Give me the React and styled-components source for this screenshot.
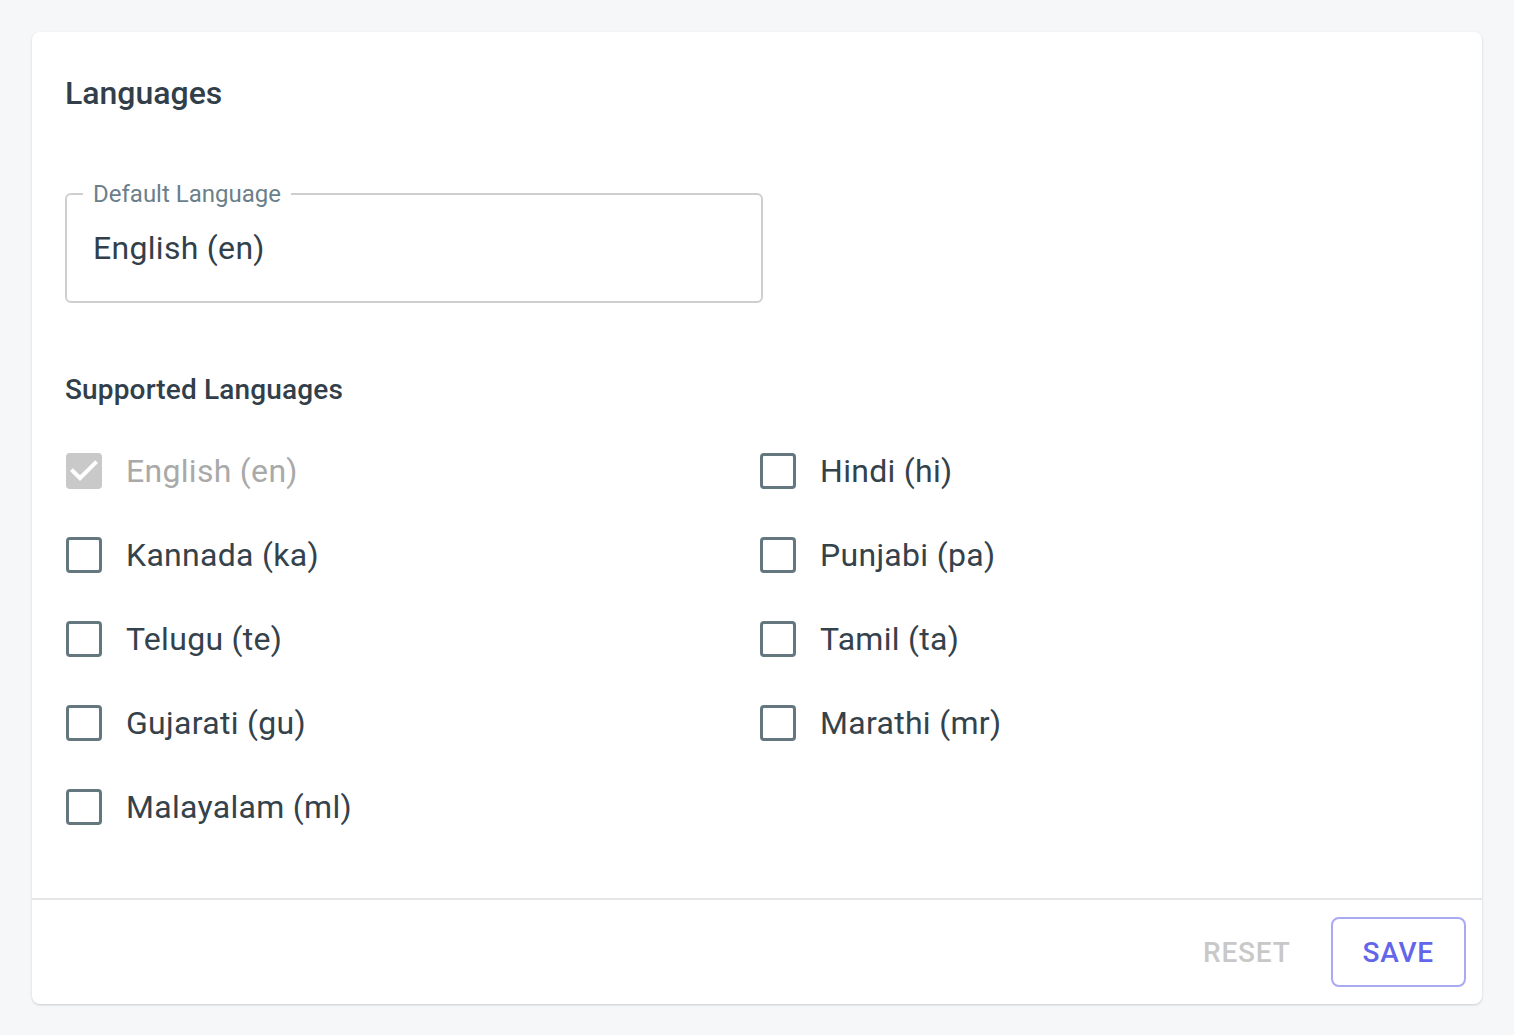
import styled, { createGlobalStyle } from 'styled-components';

const GlobalStyle = createGlobalStyle`
    body {
        margin: 0;
        background: #f6f7f9;
        font-family: Roboto, 'Liberation Sans', sans-serif;
    }
`;

const languages = [
    { name: 'English (en)', checked: true, disabled: true },
    { name: 'Hindi (hi)' },
    { name: 'Kannada (ka)' },
    { name: 'Punjabi (pa)' },
    { name: 'Telugu (te)' },
    { name: 'Tamil (ta)' },
    { name: 'Gujarati (gu)' },
    { name: 'Marathi (mr)' },
    { name: 'Malayalam (ml)' },
];

export default function App() {
    return (
        <Page>
            <GlobalStyle />
            <Card>
                <Body>
                    <Title>Languages</Title>
                    <Outlined>
                        <FloatingLabel>Default Language</FloatingLabel>
                        <Value>English (en)</Value>
                    </Outlined>
                    <Subtitle>Supported Languages</Subtitle>
                    <Grid>
                        {languages.map((lang) => (
                            <Option key={lang.name} disabled={lang.disabled}>
                                <Box checked={lang.checked}>
                                    {lang.checked && (
                                        <svg width='36' height='36' viewBox='3 3 18 18'>
                                            <path
                                                d='M10 17l-5-5 1.41-1.41L10 14.17l7.59-7.59L19 8l-9 9z'
                                                fill='#fff'
                                            />
                                        </svg>
                                    )}
                                </Box>
                                {lang.name}
                            </Option>
                        ))}
                    </Grid>
                </Body>
                <Footer>
                    <Button type='button' disabled>
                        RESET
                    </Button>
                    <Button type='button' outlined>
                        SAVE
                    </Button>
                </Footer>
            </Card>
        </Page>
    );
}

const Page = styled.div`
    padding: 32px;
    min-height: 100vh;
    box-sizing: border-box;
`;

const Card = styled.div`
    background: #fff;
    border-radius: 8px;
    box-shadow: 0 1px 3px rgba(0, 0, 0, 0.12), 0 1px 2px rgba(0, 0, 0, 0.06);
`;

const Body = styled.div`
    padding: 43px 29px 49px 33px;
`;

const Title = styled.h2`
    margin: 0;
    font-size: 32px;
    line-height: 36px;
    font-weight: 500;
    color: #323f4a;
`;

const Outlined = styled.div`
    position: relative;
    width: 698px;
    height: 110px;
    box-sizing: border-box;
    margin-top: 82px;
    border: 2px solid #cfcfcf;
    border-radius: 6px;
    display: flex;
    align-items: center;
    padding: 0 26px;
`;

const FloatingLabel = styled.span`
    position: absolute;
    top: -15px;
    left: 16px;
    padding: 0 10px;
    background: #fff;
    font-size: 24px;
    line-height: 28px;
    color: #6b7f8b;
`;

const Value = styled.span`
    font-size: 32px;
    letter-spacing: 0.3px;
    color: #323f4a;
`;

const Subtitle = styled.h3`
    margin: 71px 0 23px;
    font-size: 28px;
    line-height: 32px;
    letter-spacing: 0.15px;
    font-weight: 500;
    color: #323f4a;
`;

const Grid = styled.div`
    display: grid;
    grid-template-columns: 1fr 1fr;
    grid-auto-rows: 84px;
`;

const Option = styled.label`
    display: flex;
    align-items: center;
    gap: 24px;
    padding-left: 1px;
    font-size: 32px;
    letter-spacing: 0.3px;
    color: ${(p) => (p.disabled ? '#a9a9a9' : '#34424c')};
`;

const Box = styled.span`
    flex: none;
    width: 36px;
    height: 36px;
    box-sizing: border-box;
    border-radius: 4px;
    display: flex;
    align-items: center;
    justify-content: center;
    border: ${(p) => (p.checked ? 'none' : '3.5px solid #64777f')};
    background: ${(p) => (p.checked ? '#c9c9c9' : 'transparent')};
`;

const Footer = styled.div`
    display: flex;
    justify-content: flex-end;
    align-items: center;
    gap: 16px;
    padding: 17px 16px;
    border-top: 2px solid #e6e6e6;
`;

const Button = styled.button`
    height: 70px;
    padding: 0 ${(p) => (p.outlined ? '30px' : '22px')};
    font-family: Roboto, 'Liberation Sans', sans-serif;
    font-size: 28px;
    font-weight: 500;
    letter-spacing: 0.8px;
    background: transparent;
    border-radius: 8px;
    border: ${(p) => (p.outlined ? '2px solid #a9aaf3' : '2px solid transparent')};
    color: ${(p) => (p.disabled ? '#c8c8c8' : '#6366e8')};
`;
